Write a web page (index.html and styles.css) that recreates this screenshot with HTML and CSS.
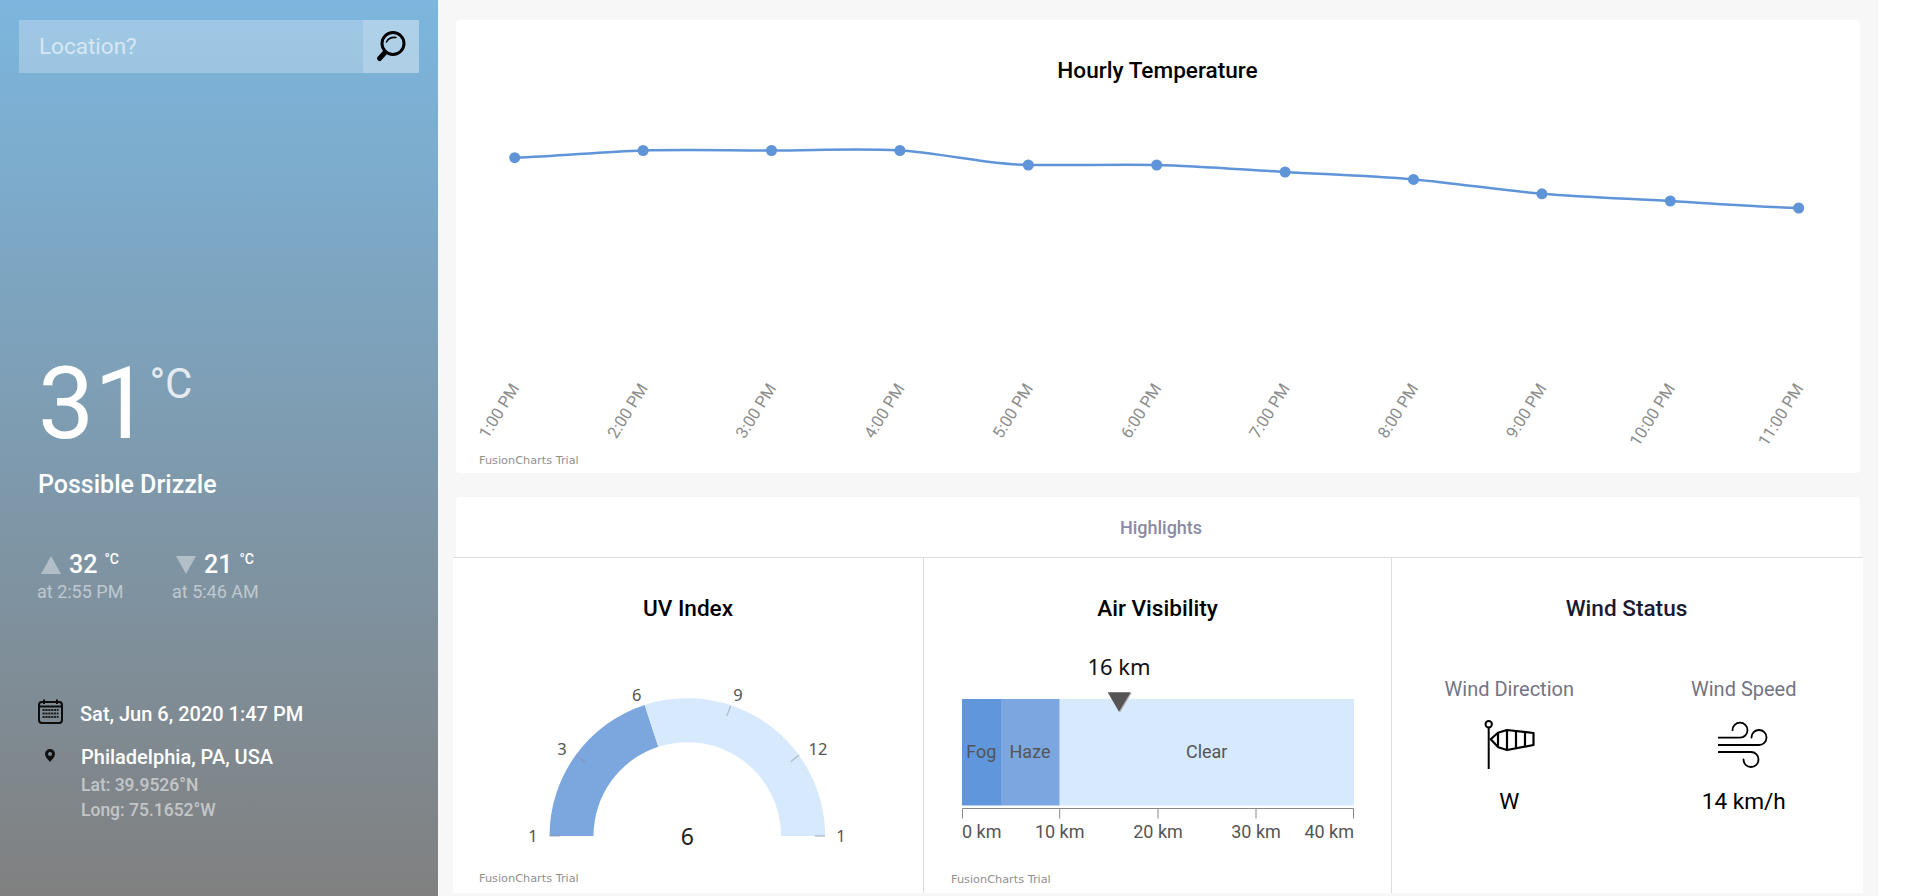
FILE: index.html
```html
<!DOCTYPE html>
<html lang="en">
<head>
    <meta charset="UTF-8">
    <meta name="viewport" content="width=device-width, initial-scale=1.0">
    <title>Weather Dashboard</title>
    <link rel="stylesheet" href="styles.css">
</head>
<body>
    <div class="app">
        <aside class="sidebar">
            <div class="search">
                <div class="search-input">Location?</div>
                <div class="search-btn">
                    <svg width="34" height="34" viewBox="0 0 34 34">
                        <circle cx="19" cy="13.500" r="11" fill="none" stroke="#000" stroke-width="3"/>
                        <path d="M12.500 12c1.500-3 5-5 9.500-4.500" fill="none" stroke="#000" stroke-width="1.600" stroke-linecap="round"/>
                        <path d="M11 22.500L5.500 28.500" fill="none" stroke="#000" stroke-width="5" stroke-linecap="round"/>
                    </svg>
                </div>
            </div>

            <div class="summary">
                <div class="temp">
                    <span class="temp-value">31</span>
                    <span class="temp-unit">°C</span>
                </div>
                <div class="condition">Possible Drizzle</div>

                <div class="extremes">
                    <div class="extreme">
                        <div class="extreme-top">
                            <span class="tri tri-up"></span>
                            <span class="extreme-value">32</span>
                            <span class="extreme-unit">°C</span>
                        </div>
                        <div class="extreme-time">at 2:55 PM</div>
                    </div>
                    <div class="extreme">
                        <div class="extreme-top">
                            <span class="tri tri-down"></span>
                            <span class="extreme-value">21</span>
                            <span class="extreme-unit">°C</span>
                        </div>
                        <div class="extreme-time">at 5:46 AM</div>
                    </div>
                </div>

                <div class="date-row">
                    <svg class="date-icon" width="25" height="25" viewBox="0 0 25 25">
                        <rect x="1" y="3" width="23" height="21" rx="3" fill="none" stroke="#0d0d0d" stroke-width="2"/>
                        <path d="M1 7.500H24" stroke="#0d0d0d" stroke-width="2"/>
                        <path d="M6 0.500V5M19 0.500V5" stroke="#0d0d0d" stroke-width="2"/>
                        <path d="M4.500 11H20.500M4.500 14.500H20.500M4.500 18H20.500" stroke="#1c1c1c" stroke-width="2.200" stroke-dasharray="2.200 0.700"/>
                    </svg>
                    <span>Sat, Jun 6, 2020 1:47 PM</span>
                </div>

                <div class="place-row">
                    <svg class="place-icon" width="10" height="13" viewBox="0 0 10 13">
                        <path fill-rule="evenodd" fill="#111" d="M5 0a5 5 0 0 1 5 5c0 3-3 5.500-5 8-2-2.500-5-5-5-8a5 5 0 0 1 5-5zm0 3a2 2 0 1 0 0 4 2 2 0 0 0 0-4z"/>
                    </svg>
                    <div>
                        <div class="place-name">Philadelphia, PA, USA</div>
                        <div class="place-coord place-coord-first">Lat: 39.9526°N</div>
                        <div class="place-coord">Long: 75.1652°W</div>
                    </div>
                </div>
            </div>
        </aside>

        <main class="main">
            <section class="card hourly">
                <svg class="chart" width="1404" height="453" viewBox="0 0 1404 453">
                    <text class="chart-title" x="701.500" y="50">Hourly Temperature</text>
                    <path class="temp-line" d="M58.700 137.700C101.500 136.500 144.300 131.700 187.100 130.500C229.900 129.300 272.700 130.500 315.500 130.500C358.300 130.500 401.100 128.100 443.900 130.500C486.700 132.900 529.500 144.500 572.300 145C615.100 145.500 657.900 144.400 700.700 145C743.500 146.200 786.300 149.600 829.100 152C871.900 154.400 914.700 155.800 957.500 159.400C1000.300 163 1043.100 170.200 1085.900 173.800C1128.700 177.400 1171.500 178.600 1214.300 181C1257.100 183.400 1299.900 186.800 1342.700 188"/>
                    <g class="temp-dots">
                        <circle cx="58.700" cy="137.700" r="5.500"/>
                        <circle cx="187.100" cy="130.500" r="5.500"/>
                        <circle cx="315.500" cy="130.500" r="5.500"/>
                        <circle cx="443.900" cy="130.500" r="5.500"/>
                        <circle cx="572.300" cy="145" r="5.500"/>
                        <circle cx="700.700" cy="145" r="5.500"/>
                        <circle cx="829.100" cy="152" r="5.500"/>
                        <circle cx="957.500" cy="159.400" r="5.500"/>
                        <circle cx="1085.900" cy="173.800" r="5.500"/>
                        <circle cx="1214.300" cy="181" r="5.500"/>
                        <circle cx="1342.700" cy="188" r="5.500"/>
                    </g>
                    <g class="hour-labels">
                        <text transform="translate(64 368) rotate(-58)">1:00 PM</text>
                        <text transform="translate(192.400 368) rotate(-58)">2:00 PM</text>
                        <text transform="translate(320.800 368) rotate(-58)">3:00 PM</text>
                        <text transform="translate(449.200 368) rotate(-58)">4:00 PM</text>
                        <text transform="translate(577.600 368) rotate(-58)">5:00 PM</text>
                        <text transform="translate(706 368) rotate(-58)">6:00 PM</text>
                        <text transform="translate(834.400 368) rotate(-58)">7:00 PM</text>
                        <text transform="translate(962.800 368) rotate(-58)">8:00 PM</text>
                        <text transform="translate(1091.200 368) rotate(-58)">9:00 PM</text>
                        <text transform="translate(1219.600 368) rotate(-58)">10:00 PM</text>
                        <text transform="translate(1348 368) rotate(-58)">11:00 PM</text>
                    </g>
                    <text class="trial" x="23" y="440">FusionCharts Trial</text>
                </svg>
            </section>

            <section class="highlights">
                <h2 class="highlights-title">Highlights</h2>
                <div class="highlights-row">
                    <div class="tile">
                        <h3 class="tile-title">UV Index</h3>
                        <svg class="tile-chart" width="470" height="273" viewBox="0 0 470 273">
                            <path fill="#7ba6de" d="M96.500 216A137.800 137.800 0 0 1 191.700 84.950L205.300 126.800A93.800 93.800 0 0 0 140.500 216Z"/>
                            <path fill="#d6e9fd" d="M191.700 84.950A137.800 137.800 0 0 1 372.100 216L328.100 216A93.800 93.800 0 0 0 205.300 126.800Z"/>
                            <path class="gauge-tick" d="M96.500 216H107M123 135L132 142M277.700 86L273.700 96M346 135L337.700 141.700M361.700 216H372"/>
                            <g class="gauge-labels">
                                <text x="80" y="215">1</text>
                                <text x="109" y="128">3</text>
                                <text x="183.700" y="74">6</text>
                                <text x="285" y="74">9</text>
                                <text x="365" y="128">12</text>
                                <text x="388" y="215">1</text>
                            </g>
                            <text class="gauge-value" x="234.300" y="216">6</text>
                            <text class="trial" x="26" y="258">FusionCharts Trial</text>
                        </svg>
                    </div>

                    <div class="tile">
                        <h3 class="tile-title">Air Visibility</h3>
                        <svg class="tile-chart" width="467" height="273" viewBox="0 0 467 273">
                            <text class="bullet-value" x="195" y="46">16 km</text>
                            <rect x="38" y="79" width="39" height="106.500" fill="#6097dc"/>
                            <rect x="77" y="79" width="58.700" height="106.500" fill="#7ba6e0"/>
                            <rect x="135.700" y="79" width="294.300" height="106.500" fill="#d6e9fd"/>
                            <path d="M184.700 73H207.700L196 92.700Z" fill="#b5b5b5"/>
                            <path d="M183.700 72.300H206.700L195 91.700Z" fill="#555"/>
                            <g class="bullet-labels">
                                <text x="57.300" y="131">Fog</text>
                                <text x="106" y="131">Haze</text>
                                <text x="282.700" y="131">Clear</text>
                                <text x="38" y="211" class="anchor-start">0 km</text>
                                <text x="135.700" y="211">10 km</text>
                                <text x="234" y="211">20 km</text>
                                <text x="332" y="211">30 km</text>
                                <text x="430" y="211" class="anchor-end">40 km</text>
                            </g>
                            <path class="bullet-axis" d="M38.500 198.500V188.500H429.500V198.500M135.700 188.500V198.500M234 188.500V198.500M332 188.500V198.500"/>
                            <text class="trial" x="27" y="259">FusionCharts Trial</text>
                        </svg>
                    </div>

                    <div class="tile tile-last">
                        <h3 class="tile-title tile-title-dark">Wind Status</h3>
                        <div class="wind">
                            <div class="wind-item">
                                <div class="wind-label">Wind Direction</div>
                                <svg class="wind-icon" width="52" height="51" viewBox="0 0 52 51">
                                    <circle cx="5.700" cy="5.300" r="3.200" fill="none" stroke="#000" stroke-width="2"/>
                                    <path d="M5.700 8.500V50" stroke="#000" stroke-width="2"/>
                                    <path d="M7.700 20.300L15 13.700L24 11L50.500 14V26L24 31L15.300 28.300Z" fill="none" stroke="#000" stroke-width="2.200" stroke-linejoin="round"/>
                                    <path d="M15 13.700V28.300M24 11V31M33 12V29.300M42 13V27.700" stroke="#000" stroke-width="2.200"/>
                                </svg>
                                <div class="wind-value">W</div>
                            </div>
                            <div class="wind-item">
                                <div class="wind-label">Wind Speed</div>
                                <svg class="wind-icon" width="52" height="51" viewBox="0 0 52 51">
                                    <g fill="none" stroke="#000" stroke-width="1.800" stroke-linecap="round">
                                        <path d="M0 18.700H22a7.500 7.500 0 1 0-7.500-7.500"/>
                                        <path d="M0 26H41a7.500 7.500 0 1 0-7.500-7.500"/>
                                        <path d="M0 33H33a7.500 7.500 0 1 1-7.500 7.500"/>
                                    </g>
                                </svg>
                                <div class="wind-value">14 km/h</div>
                            </div>
                        </div>
                    </div>
                </div>
            </section>
        </main>
    </div>
</body>
</html>
```

FILE: styles.css
```css
* {
    box-sizing: border-box;
}

body {
    margin: 0;
    height: 896px;
    overflow: hidden;
    background: #fff;
    font-family: Roboto, Arial, sans-serif;
}

.app {
    display: flex;
    width: 1878px;
    height: 896px;
}

/* sidebar */
.sidebar {
    width: 438px;
    flex: none;
    padding: 20px 19px 0;
    background: linear-gradient(180deg, #7cb6de 0%, #808080 100%);
    color: #fff;
}

.search {
    display: flex;
    height: 53px;
}

.search-input {
    flex: 1;
    padding-left: 20px;
    background: rgba(255, 255, 255, 0.25);
    color: rgba(255, 255, 255, 0.6);
    font-size: 22.500px;
    line-height: 53px;
}

.search-btn {
    width: 56px;
    display: flex;
    align-items: center;
    justify-content: center;
    background: rgba(255, 255, 255, 0.38);
}

.summary {
    padding-left: 19px;
}

.temp {
    display: flex;
    align-items: flex-start;
    margin-top: 281px;
}

.temp-value {
    font-size: 100px;
    line-height: 100px;
}

.temp-unit {
    margin-top: 9px;
    margin-left: -1px;
    font-size: 42px;
    line-height: 42px;
    opacity: 0.8;
}

.condition {
    margin-top: 16px;
    font-size: 25px;
    line-height: 30px;
    font-weight: 500;
}

.extremes {
    display: flex;
    margin-top: 50px;
}

.extreme {
    width: 135px;
}

.extreme-top {
    display: flex;
    align-items: flex-start;
    padding-left: 3px;
}

.tri {
    width: 0;
    height: 0;
    margin-top: 6px;
    margin-right: 8px;
    border-left: 10px solid transparent;
    border-right: 10px solid transparent;
}

.tri-up {
    border-bottom: 18px solid rgba(255, 255, 255, 0.4);
}

.tri-down {
    border-top: 18px solid rgba(255, 255, 255, 0.4);
}

.extreme-value {
    font-size: 25px;
    line-height: 30px;
    font-weight: 500;
}

.extreme-unit {
    margin-top: 2px;
    margin-left: 7px;
    font-size: 14px;
    line-height: 14px;
    font-weight: 500;
}

.extreme-time {
    margin-top: 1px;
    margin-left: -1px;
    font-size: 18px;
    line-height: 22px;
    color: rgba(255, 255, 255, 0.5);
}

.date-row {
    display: flex;
    align-items: flex-start;
    margin-top: 99px;
    font-size: 20px;
    line-height: 24px;
    font-weight: 500;
}

.date-icon {
    margin-top: -3px;
    margin-right: 17px;
    flex: none;
}

.place-row {
    display: flex;
    align-items: flex-start;
    margin-top: 19px;
}

.place-icon {
    flex: none;
    margin: 4px 26px 0 7px;
}

.place-name {
    font-size: 20px;
    line-height: 24px;
    font-weight: 500;
}

.place-coord {
    font-size: 17.500px;
    line-height: 25px;
    font-weight: 500;
    color: rgba(255, 255, 255, 0.55);
}

.place-coord-first {
    margin-top: 4px;
}

/* main column */
.main {
    flex: 1;
    padding: 20px 18px 3px;
    background: #f7f7f7;
}

.card {
    background: #fff;
    border-radius: 4px;
}

.hourly {
    height: 453px;
}

.chart,
.tile-chart {
    display: block;
}

.chart-title {
    font-size: 22.600px;
    font-weight: 500;
    fill: #000;
    text-anchor: middle;
    dominant-baseline: central;
}

.temp-line {
    fill: none;
    stroke: #5f94d9;
    stroke-width: 2.500;
}

.temp-dots {
    fill: #5f94d9;
}

.hour-labels {
    font-size: 16.500px;
    fill: #8c8c8c;
    text-anchor: end;
}

.trial {
    font-family: "DejaVu Sans", sans-serif;
    font-size: 11.300px;
    fill: #8f8f8f;
    dominant-baseline: central;
}

/* highlights */
.highlights {
    margin-top: 24px;
}

.highlights-title {
    height: 60px;
    margin: 0;
    padding: 1px 0 0 6px;
    background: #fff;
    border-radius: 4px 4px 0 0;
    text-align: center;
    font-size: 18px;
    line-height: 60px;
    font-weight: 500;
    color: #8a8aa5;
}

.highlights-row {
    display: grid;
    grid-template-columns: 471px 468px 469px;
    height: 336px;
    margin: 0 -3px;
    background: #fff;
    border-top: 1px solid #dedede;
}

.tile {
    border-right: 1px solid #dcdcdc;
}

.tile-last {
    border-right: 0;
}

.tile-title {
    margin: 0 0 -2px;
    padding-top: 38px;
    text-align: center;
    font-size: 22.600px;
    line-height: 26px;
    font-weight: 500;
    color: #000;
}

.tile-title-dark {
    color: #1a1a33;
}

.gauge-tick {
    fill: none;
    stroke: #8a8f99;
    stroke-opacity: 0.5;
    stroke-width: 1.300;
}

.gauge-labels {
    font-family: "Noto Sans", sans-serif;
    font-size: 16.500px;
    fill: #555;
    text-anchor: middle;
    dominant-baseline: central;
}

.gauge-value {
    font-family: "Noto Sans", sans-serif;
    font-size: 23px;
    fill: #222;
    text-anchor: middle;
    dominant-baseline: central;
}

.bullet-value {
    font-family: "Noto Sans", sans-serif;
    font-size: 22px;
    fill: #111;
    text-anchor: middle;
    dominant-baseline: central;
}

.bullet-labels {
    font-size: 18px;
    fill: #555;
    text-anchor: middle;
    dominant-baseline: central;
}

.bullet-labels .anchor-start {
    text-anchor: start;
}

.bullet-labels .anchor-end {
    text-anchor: end;
}

.bullet-axis {
    fill: none;
    stroke: #888;
    stroke-width: 1;
}

/* wind */
.wind {
    display: flex;
    margin-top: 57px;
}

.wind-item {
    flex: 1;
    display: flex;
    flex-direction: column;
    align-items: center;
}

.wind-label {
    font-size: 20px;
    line-height: 24px;
    color: #747485;
}

.wind-icon {
    display: block;
    margin-top: 18px;
}

.wind-value {
    margin-top: 19px;
    font-size: 22.600px;
    line-height: 26px;
    color: #000;
}
```
